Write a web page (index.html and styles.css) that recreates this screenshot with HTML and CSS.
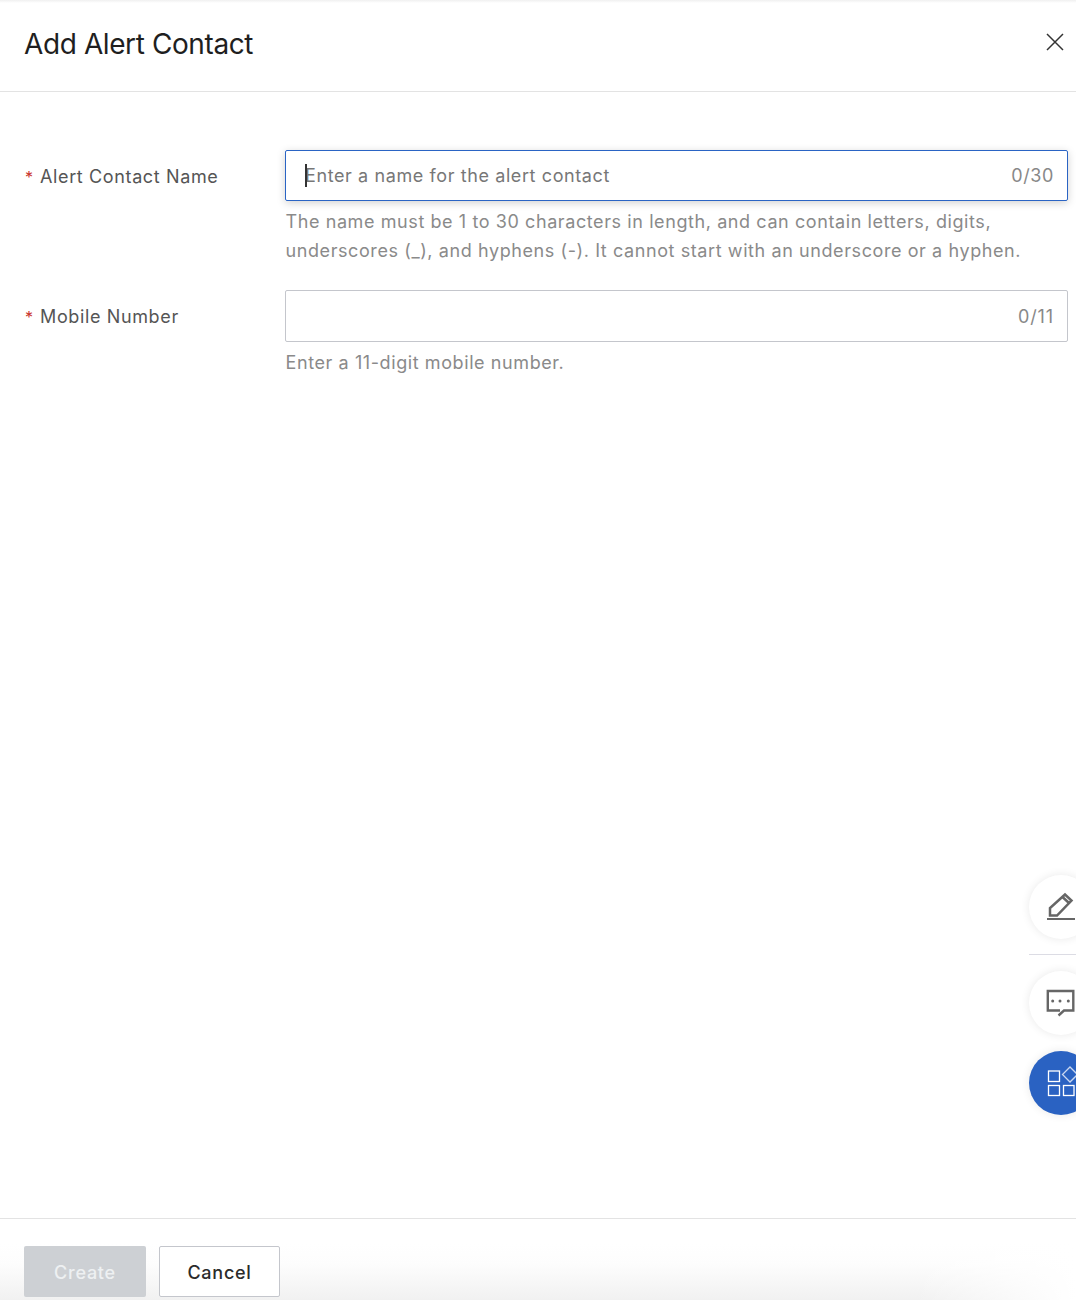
FILE: index.html
```html
<!DOCTYPE html>
<html lang="en">
<head>
<meta charset="utf-8">
<title>Add Alert Contact</title>
<link rel="stylesheet" href="styles.css">
</head>
<body>
<div class="drawer">
  <header class="head">
    <h1 class="title">Add Alert Contact</h1>
    <button class="close" aria-label="Close">
      <svg width="18" height="18" viewBox="0 0 18 18"><path d="M1 1 L17 17 M17 1 L1 17" stroke="#333" stroke-width="1.5" fill="none"/></svg>
    </button>
  </header>
  <main class="form">
    <div class="row">
      <label class="label"><span class="req">*</span>Alert Contact Name</label>
      <div class="field">
        <div class="input input-focus">
          <span class="caret"></span><span class="placeholder">Enter a name for the alert contact</span>
          <span class="count">0/30</span>
        </div>
        <p class="help">The name must be 1 to 30 characters in length, and can contain letters, digits, underscores (_), and hyphens (-). It cannot start with an underscore or a hyphen.</p>
      </div>
    </div>
    <div class="row">
      <label class="label"><span class="req">*</span>Mobile Number</label>
      <div class="field">
        <div class="input">
          <span class="placeholder"></span>
          <span class="count count-short">0/11</span>
        </div>
        <p class="help">Enter a 11-digit mobile number.</p>
      </div>
    </div>
  </main>
  <footer class="foot">
    <button class="btn btn-primary">Create</button>
    <button class="btn btn-default">Cancel</button>
  </footer>
</div>
<aside class="fabs">
  <div class="fab">
    <svg class="fab-icon" width="28" height="28" viewBox="0 0 28 28" fill="none" stroke="#666" stroke-width="2.500"><path d="M3 23.500 V16 L18 2.500 L24.500 8.500 L10 23.500 Z M15.500 5 L22 11"/><path d="M0 27 H28" stroke-width="2"/></svg>
  </div>
  <div class="fab-sep"></div>
  <div class="fab">
    <svg class="fab-icon" width="28" height="28" viewBox="0 0 28 28" fill="none" stroke="#666" stroke-width="2.400"><path d="M13 22.500 H.8 V3 H26.300 V22.500 H17 L11.500 27.500"/><circle cx="5.700" cy="13" r="1.500" fill="#666" stroke="none"/><circle cx="13" cy="13" r="1.500" fill="#666" stroke="none"/><circle cx="21.300" cy="13" r="1.500" fill="#666" stroke="none"/></svg>
  </div>
  <div class="fab fab-blue">
    <svg class="fab-icon" width="30" height="30" viewBox="0 0 30 30" fill="none" stroke="#fff" stroke-width="1.300"><rect x="1.500" y="3" width="11" height="10.500"/><rect x="1.500" y="17.500" width="11" height="10"/><rect x="16.500" y="17.500" width="10.500" height="10"/><path d="M23 -1 L30.500 6.500 L23 14 L15.500 6.500 Z" opacity=".75"/></svg>
  </div>
</aside>
</body>
</html>
```
FILE: styles.css
```css
* { box-sizing: border-box; }
html, body { margin: 0; height: 1300px; overflow: hidden; background: #fff; }
body {
  position: relative;
  font-family: Inter, "Liberation Sans", sans-serif;
  color: #333;
}
.drawer {
  height: 1300px;
  display: flex;
  flex-direction: column;
  background: linear-gradient(#f0f0f0, #fff 3px);
}
.head {
  height: 92px;
  flex: none;
  border-bottom: 1px solid #e3e3e3;
  display: flex;
  align-items: center;
  justify-content: space-between;
  padding: 0 12px 4px 24px;
}
.title { margin: 0; font-size: 28px; font-weight: 400; color: #1f1f1f; line-height: 36px; letter-spacing: -0.4px; }
.close { border: 0; background: none; padding: 0; width: 18px; height: 18px; display: block; margin-top: -4px; }
.form { flex: 1; padding: 58px 8px 0 25px; }
.row { display: flex; margin-bottom: 25px; }
.label {
  width: 260px;
  flex: none;
  font-size: 18px;
  line-height: 54px;
  letter-spacing: .63px;
  color: #555;
}
.req { color: #c8332b; display: inline-block; width: 15px; font-size: 16px; }
.field { flex: 1; min-width: 0; }
.input {
  height: 52px;
  border: 1px solid #c4c6cc;
  border-radius: 2px;
  display: flex;
  align-items: center;
  padding: 0 13px 0 19px;
  font-size: 18px;
  letter-spacing: .6px;
  position: relative;
}
.input-focus {
  border-color: #2a64c4;
  box-shadow: 0 2px 8px rgba(0,0,0,.18);
  height: 51px;
}
.caret { position: absolute; left: 19px; top: 13px; width: 2px; height: 23px; background: #333; }
.placeholder { flex: 1; color: #777; }
.count { color: #888; }
.count-short { letter-spacing: .9px; }
.help {
  margin: 6px 0 0;
  padding-left: .5px;
  font-size: 18px;
  line-height: 29px;
  letter-spacing: .59px;
  color: #8a8a8a;
}
.foot {
  height: 82px;
  flex: none;
  border-top: 1px solid #e3e3e3;
  padding: 27px 0 0 24px;
  display: flex;
  gap: 13px;
  align-items: flex-start;
  background:
    linear-gradient(to right, rgba(255,255,255,0) 85%, #fff 100%),
    linear-gradient(#fff 25px, #fdfdfd 45px, #f1f1f1);
}
.btn {
  height: 51px;
  border-radius: 2px;
  font-family: inherit;
  font-size: 18px;
  font-weight: 500;
  letter-spacing: .75px;
  padding: 2px 0 0;
}
.btn-primary { width: 122px; background: #cdd0d4; border: 0; color: #eef0f2; }
.btn-default { width: 121px; background: #fff; border: 1px solid #c4c6cc; color: #2b2b2b; }
.fabs {
  position: absolute;
  left: 1029px;
  top: 875px;
  width: 64px;
  display: flex;
  flex-direction: column;
}
.fab {
  width: 64px;
  height: 64px;
  border-radius: 50%;
  background: #fff;
  box-shadow: 0 0 10px rgba(0,0,0,.09);
  position: relative;
}
.fab-sep { width: 47px; height: 1px; background: #dcdce4; margin: 15px 0 16px; }
.fab-blue { background: #2a62c2; margin-top: 16px; }
.fab-icon { position: absolute; left: 18px; top: 17px; overflow: visible; }
```
